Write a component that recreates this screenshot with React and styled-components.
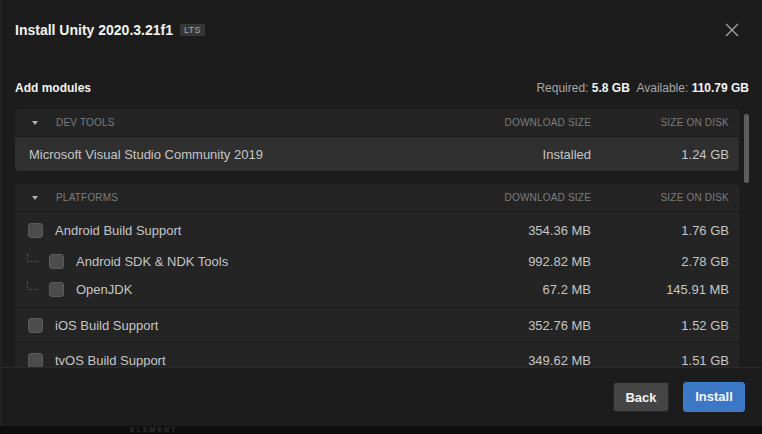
import React from "react";
import styled, { createGlobalStyle } from "styled-components";

const GlobalStyle = createGlobalStyle`
  html, body {
    margin: 0;
    padding: 0;
    background: #0e0e0e;
    font-family: "Liberation Sans", Arial, sans-serif;
  }
  #root {
    width: 762px;
    height: 434px;
    overflow: hidden;
  }
`;

const Screen = styled.div`
  width: 762px;
  height: 434px;
  display: flex;
  flex-direction: column;
  background: #0e0e0e;
`;

const Dialog = styled.div`
  height: 426px;
  display: flex;
  flex-direction: column;
  background: #1c1c1c;
  border-left: 1px solid #262626;
  box-sizing: border-box;
  flex-shrink: 0;
`;

const TitleBar = styled.div`
  height: 60px;
  display: flex;
  align-items: center;
  padding: 0 23px 0 14px;
`;

const Title = styled.h1`
  margin: 0;
  font-size: 14px;
  font-weight: bold;
  color: #f2f2f2;
`;

const Badge = styled.span`
  margin-left: 7px;
  padding: 0 4px;
  height: 12px;
  line-height: 12px;
  font-size: 9px;
  letter-spacing: 0.3px;
  color: #a8a8a8;
  background: #363636;
  border-radius: 1px;
`;

const CloseButton = styled.button`
  margin-left: auto;
  width: 14px;
  height: 14px;
  padding: 0;
  border: 0;
  background: none;
  color: #a5a5a5;
  display: flex;
`;

const SummaryRow = styled.div`
  margin-top: 18px;
  height: 20px;
  display: flex;
  align-items: center;
  padding: 0 13px 0 14px;
  font-size: 12px;
`;

const SectionTitle = styled.div`
  font-weight: bold;
  color: #f2f2f2;
`;

const Summary = styled.div`
  margin-left: auto;
  color: #a8a8a8;
  b {
    color: #f4f4f4;
    margin-right: 4px;
  }
  b:last-child {
    margin-right: 0;
  }
`;

const ListArea = styled.div`
  margin-top: 11px;
  flex: 1;
  min-height: 0;
  display: flex;
  overflow: hidden;
  padding-left: 14px;
`;

const Panels = styled.div`
  width: 724px;
  display: flex;
  flex-direction: column;
  gap: 13px;
`;

const ScrollTrack = styled.div`
  flex: 1;
  padding: 5px 0 0 5px;
`;

const ScrollThumb = styled.div`
  width: 5px;
  height: 69px;
  border-radius: 2px;
  background: #505050;
  background-image: radial-gradient(#6e6e6e 0.6px, transparent 0.8px);
  background-size: 2px 2px;
`;

const Panel = styled.section`
  background: #242424;
  border-radius: 3px;
  overflow: hidden;
  flex-shrink: 0;
`;

const Grid = styled.div`
  display: grid;
  grid-template-columns: 1fr 140px 138px;
  align-items: center;
  padding-right: 10px;
`;

const PanelHeader = styled(Grid)`
  height: 27px;
  border-bottom: 1px solid #1b1b1b;
  font-size: 10px;
  letter-spacing: 0.2px;
  color: #7c7c7c;
  text-transform: uppercase;
`;

const HeaderName = styled.div`
  display: flex;
  align-items: center;
  padding-left: 17px;
`;

const Caret = styled.span`
  width: 0;
  height: 0;
  border-left: 3.5px solid transparent;
  border-right: 3.5px solid transparent;
  border-top: 4px solid #b0b0b0;
  margin-right: 18px;
`;

const Right = styled.div`
  text-align: right;
`;

const Row = styled(Grid)`
  height: ${(p) => p.$height}px;
  margin-top: ${(p) => p.$offset || 0}px;
  font-size: 13px;
  color: #c6c6c6;
  background: ${(p) => (p.$active ? "#2f2f2f" : "transparent")};
  border-top: ${(p) => (p.$divider ? "1px solid #1a1a1a" : "0")};
`;

const Name = styled.div`
  display: flex;
  align-items: center;
  padding-left: ${(p) => p.$indent}px;
`;

const Group = styled.div`
  padding: 4px 0 4px;
`;

const Checkbox = styled.span`
  width: 13px;
  height: 13px;
  border: 1px solid #5c5c5c;
  border-radius: 3px;
  background: #383838;
  background-image: radial-gradient(#626262 0.6px, transparent 0.8px);
  background-size: 2px 2px;
  margin-right: 12px;
  flex-shrink: 0;
`;

const Connector = styled.span`
  width: 10px;
  height: 7px;
  margin: -6px 11px 0 0;
  border-left: 1px dotted #5c5c5c;
  border-bottom: 1px dotted #5c5c5c;
`;

const Footer = styled.footer`
  height: 58px;
  border-top: 1px solid #2a2a2a;
  display: flex;
  align-items: center;
  justify-content: flex-end;
  gap: 14px;
  padding-right: 17px;
  flex-shrink: 0;
`;

const Button = styled.button`
  height: 30px;
  width: ${(p) => (p.$primary ? 62 : 56)}px;
  padding: 0;
  border-radius: 3px;
  font-family: inherit;
  font-size: 13px;
  font-weight: bold;
  color: #f4f4f4;
  border: 1px solid ${(p) => (p.$primary ? "#3f7cc9" : "#262626")};
  background: ${(p) => (p.$primary ? "#3b77c5" : "#3e3e3e")};
  background-image: ${(p) =>
    p.$primary ? "none" : "radial-gradient(#4e4e4e 0.6px, transparent 0.8px)"};
  background-size: 2px 2px;
  margin-top: ${(p) => (p.$primary ? -1 : 0)}px;
`;

const BottomStrip = styled.div`
  height: 8px;
  display: flex;
  align-items: center;
  padding-left: 130px;
  font-size: 7px;
  line-height: 8px;
  font-weight: bold;
  color: #2e2e2e;
  letter-spacing: 2px;
`;

const platforms = [
  {
    name: "Android Build Support",
    download: "354.36 MB",
    disk: "1.76 GB",
    children: [
      { name: "Android SDK & NDK Tools", download: "992.82 MB", disk: "2.78 GB" },
      { name: "OpenJDK", download: "67.2 MB", disk: "145.91 MB" },
    ],
  },
  { name: "iOS Build Support", download: "352.76 MB", disk: "1.52 GB" },
  { name: "tvOS Build Support", download: "349.62 MB", disk: "1.51 GB" },
];

const ModuleRow = ({ item, child, height = 28, divider, offset }) => (
  <Row $height={height} $divider={divider} $offset={offset}>
    <Name $indent={child ? 12 : 13}>
      {child && <Connector />}
      <Checkbox />
      {item.name}
    </Name>
    <Right>{item.download}</Right>
    <Right>{item.disk}</Right>
  </Row>
);

const SectionHeader = ({ title }) => (
  <PanelHeader>
    <HeaderName>
      <Caret />
      {title}
    </HeaderName>
    <Right>Download size</Right>
    <Right>Size on disk</Right>
  </PanelHeader>
);

export default function App() {
  return (
    <Screen>
      <GlobalStyle />
      <Dialog>
        <TitleBar>
          <Title>Install Unity 2020.3.21f1</Title>
          <Badge>LTS</Badge>
          <CloseButton aria-label="Close">
            <svg width="14" height="14" viewBox="0 0 14 14">
              <path d="M1 1 L13 13 M13 1 L1 13" stroke="currentColor" strokeWidth="1.3" />
            </svg>
          </CloseButton>
        </TitleBar>

        <SummaryRow>
          <SectionTitle>Add modules</SectionTitle>
          <Summary>
            Required: <b>5.8 GB</b> Available: <b>110.79 GB</b>
          </Summary>
        </SummaryRow>

        <ListArea>
          <Panels>
            <Panel>
              <SectionHeader title="Dev tools" />
              <Row $height={34} $active>
                <Name $indent={14}>Microsoft Visual Studio Community 2019</Name>
                <Right>Installed</Right>
                <Right>1.24 GB</Right>
              </Row>
            </Panel>

            <Panel>
              <SectionHeader title="Platforms" />
              {platforms.map((p, i) =>
                p.children ? (
                  <Group key={p.name}>
                    <ModuleRow item={p} />
                    {p.children.map((c, j) => (
                      <ModuleRow key={c.name} item={c} child offset={j === 0 ? 3 : 0} />
                    ))}
                  </Group>
                ) : (
                  <ModuleRow key={p.name} item={p} height={34} divider={i > 0} />
                )
              )}
            </Panel>
          </Panels>
          <ScrollTrack>
            <ScrollThumb />
          </ScrollTrack>
        </ListArea>

        <Footer>
          <Button>Back</Button>
          <Button $primary>Install</Button>
        </Footer>
      </Dialog>
      <BottomStrip>ELEMENT</BottomStrip>
    </Screen>
  );
}
